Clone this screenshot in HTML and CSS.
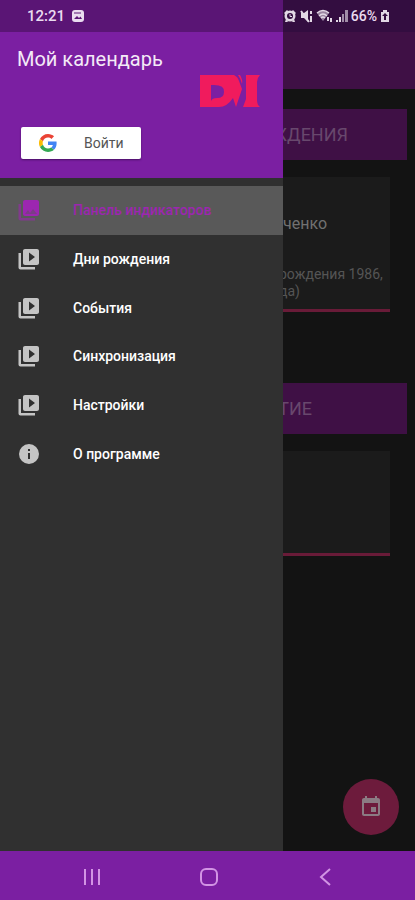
FILE: index.html
```html
<!DOCTYPE html>
<html lang="ru">
<head>
<meta charset="utf-8">
<meta name="viewport" content="width=device-width, initial-scale=1">
<title>Мой календарь</title>
<link rel="stylesheet" href="styles.css">
</head>
<body>
<svg class="sprite" aria-hidden="true">
  <symbol id="library" viewBox="0 0 24 24"><path d="M4 6H1.500v14.500c0 1.100.9 2 2 2H18V20H4V6zm16-4H8c-1.100 0-2 .9-2 2v12c0 1.100.9 2 2 2h12c1.100 0 2-.9 2-2V4c0-1.100-.9-2-2-2zm-8 12.500v-9l6 4.500-6 4.500z"/></symbol>
</svg>
<div class="screen">
  <header class="status">
    <div class="status-left">
      <span>12:21</span>
      <svg width="14" height="14" viewBox="0 0 14 14"><rect x="1" y="1" width="12" height="12" rx="3" fill="#eadcf0"/><path d="M3 10l3-3 2 2 1.500-1.500L11 10z" fill="#5a1575"/><path d="M3 4h7" stroke="#5a1575"/></svg>
    </div>
    <div class="status-right">
      <svg width="13" height="14" viewBox="0 0 13 14" fill="#e2d8e5"><circle cx="6" cy="7" r="5.500"/><path d="M0 4l3-3 2 2-3 3zM12 4L9 1 7 3l3 3zM2 10l-1 3h3zm8 0l1 3H8z"/><circle cx="6" cy="7" r="3" fill="#330d40"/><path d="M6 5v2.500h2" stroke="#e2d8e5" fill="none"/></svg>
      <svg width="13" height="14" viewBox="0 0 13 14"><path d="M1 4h3l4-3v12L4 9H1z" fill="#e2d8e5"/><path d="M1 2l8 11M11 2v3M11 7v6" stroke="#e2d8e5" stroke-width="2"/></svg>
      <svg width="17" height="14" viewBox="0 0 17 14"><path d="M1 4q6-5 12 0L7 12z" fill="#9a84a1"/><path d="M1 4q6-5 12 0M3 7q4-4 8 0M5 9q2-2 4 0" stroke="#e2d8e5" stroke-width="1.500" fill="none"/><path d="M12 8v4M15 9v4" stroke="#e2d8e5" stroke-width="2"/></svg>
      <svg width="12" height="14" viewBox="0 0 12 14"><path d="M0 11h2v2H0zM3 8h2v5H3z" fill="#e2d8e5"/><path d="M6 5h2v8H6zM9 1h3v12H9z" fill="#a18da8"/></svg>
      <span>66%</span>
      <svg width="10" height="14" viewBox="0 0 10 14"><path d="M3 1h4v2h2v10H1V3h2z" fill="#e2d8e5"/><path d="M5 4L2 7h2v4h2V7h2z" fill="#330d40"/></svg>
    </div>
  </header>
  <aside class="drawer">
    <div class="account">
      <h1>Мой календарь</h1>
      <svg class="logo" width="62" height="34" viewBox="0 0 62 34" fill="#f01b5d"><path fill-rule="evenodd" d="M1 1H35q4 2 5 6l3 8-6 18-3-9q-6 9-14 9H1zM12 11q14-1 13 7 0 6-7 6-5 0-6 3z"/><path d="M39 1h2q3 5 2 9-1-5-4-9z"/><path d="M47 1h14q-3 3-3 7v18q0 5 3 7H44l3-8z"/></svg>
      <button class="signin" type="button">
        <svg width="18" height="18" viewBox="0 0 48 48"><path fill="#ea4335" d="M24 9.500c3.540 0 6.710 1.220 9.210 3.600l6.850-6.850C35.900 2.380 30.470 0 24 0 14.620 0 6.510 5.380 2.560 13.220l7.980 6.190C12.430 13.720 17.740 9.500 24 9.500z"/><path fill="#4285f4" d="M46.980 24.550c0-1.570-.15-3.090-.38-4.550H24v9.020h12.940c-.58 2.960-2.260 5.480-4.780 7.180l7.730 6c4.510-4.180 7.090-10.360 7.090-17.650z"/><path fill="#fbbc05" d="M10.530 28.590A14.500 14.500 0 0 1 10.530 19.410l-7.980-6.190a24 24 0 0 0 0 21.560z"/><path fill="#34a853" d="M24 48c6.480 0 11.930-2.130 15.890-5.810l-7.730-6c-2.150 1.450-4.920 2.300-8.160 2.300-6.260 0-11.570-4.220-13.470-9.910l-7.980 6.190C6.510 42.620 14.620 48 24 48z"/></svg>
        <span>Войти</span>
      </button>
    </div>
    <nav class="menu">
      <a href="#" class="item selected"><svg viewBox="0 0 24 24"><path opacity=".6" d="M4 6H1.500v14.500c0 1.100.9 2 2 2H18V20H4z"/><path d="M22 16V4c0-1.100-.9-2-2-2H8c-1.100 0-2 .9-2 2v12c0 1.100.9 2 2 2h12c1.100 0 2-.9 2-2z"/><path d="M8 16l3-4 2 3 3-4 4 5z" fill="#7b3d86"/></svg>Панель индикаторов</a>
      <a href="#" class="item"><svg><use href="#library"/></svg>Дни рождения</a>
      <a href="#" class="item"><svg><use href="#library"/></svg>События</a>
      <a href="#" class="item"><svg><use href="#library"/></svg>Синхронизация</a>
      <a href="#" class="item"><svg><use href="#library"/></svg>Настройки</a>
      <a href="#" class="item"><svg viewBox="0 0 24 24"><path d="M12 2a10 10 0 1 0 0 20 10 10 0 0 0 0-20zm1 15h-2v-6h2zm0-8h-2V7h2z"/></svg>О программе</a>
    </nav>
  </aside>
  <main class="content">
    <div class="appbar"></div>
    <section class="group">
      <h2 class="heading birthday">ЖДЕНИЯ</h2>
      <article class="card person">
        <h3>ченко</h3>
        <p>рождения 1986,<br>да)</p>
      </article>
    </section>
    <section class="group">
      <h2 class="heading event">ТИЕ</h2>
      <article class="card"></article>
    </section>
    <button class="fab" type="button" aria-label="Добавить">
      <svg width="24" height="24" viewBox="0 0 24 24"><path d="M17 12h-5v5h5v-5zM16 1v2H8V1H6v2H5c-1.110 0-2 .9-2 2v14c0 1.100.89 2 2 2h14c1.100 0 2-.9 2-2V5c0-1.100-.9-2-2-2h-1V1h-2zm3 18H5V8h14v11z"/></svg>
    </button>
  </main>
  <footer class="system">
    <button type="button" aria-label="Недавние"><svg width="24" height="24" viewBox="0 0 24 24"><path d="M6 5v16M13 5v16M20 5v16"/></svg></button>
    <button type="button" aria-label="Домой"><svg width="24" height="24" viewBox="0 0 24 24"><rect x="5" y="5" width="16" height="16" rx="5"/></svg></button>
    <button type="button" aria-label="Назад"><svg width="24" height="24" viewBox="0 0 24 24"><path d="M18 5l-9 8 9 8"/></svg></button>
  </footer>
</div>
</body>
</html>
```
FILE: styles.css
```css
* {
  box-sizing: border-box;
}

body,
h1,
h2,
h3,
p {
  margin: 0;
  font-weight: 400;
}

body {
  font-family: Roboto, "Noto Sans", sans-serif;
  background: #131313;
}

button {
  border: 0;
  padding: 0;
  font: inherit;
}

.sprite {
  display: none;
}

.screen {
  display: grid;
  grid-template-columns: 283px minmax(0, 1fr);
  grid-template-rows: 32px 1fr 49px;
  min-height: 100vh;
}

.status {
  grid-column: 1 / -1;
  display: flex;
  justify-content: space-between;
  padding: 0 25px 0 27px;
  background: linear-gradient(90deg, #5a1575 283px, #330d40 283px);
  color: #eadcf0;
  font-size: 15px;
  font-weight: 500;
}

.status-left,
.status-right {
  display: flex;
  align-items: center;
}

.status-left {
  gap: 6px;
}

.status-right {
  gap: 3px;
  font-size: 14px;
}

.drawer {
  background: #303030;
}

.account {
  display: flex;
  flex-direction: column;
  height: 146px;
  padding: 14px 22px 19px 17px;
  background: #7b1fa2;
}

.account h1 {
  color: #f4eaf7;
  font-size: 20px;
  line-height: 26px;
}

.logo {
  align-self: flex-end;
  margin-top: 2px;
}

.signin {
  display: flex;
  align-items: center;
  gap: 27px;
  width: 120px;
  height: 32px;
  margin-top: auto;
  margin-left: 4px;
  padding-left: 18px;
  border-radius: 2px;
  background: #fff;
  box-shadow: 0 1px 2px #4a1065;
  color: #555;
  font-size: 14px;
}

.menu {
  display: grid;
  grid-auto-rows: 1fr;
  height: 300px;
  padding-top: 8px;
}

.item {
  display: flex;
  align-items: center;
  gap: 32px;
  padding-left: 17px;
  color: #fff;
  font-size: 14px;
  font-weight: 500;
  text-decoration: none;
}

.item svg {
  width: 24px;
  height: 24px;
  fill: #c4c4c4;
}

.item.selected {
  background: #595959;
  color: #9c27b0;
}

.item.selected svg {
  fill: #9c27b0;
}

.content {
  display: flex;
  flex-direction: column;
  overflow: hidden;
  background: #131313;
  color: #666;
}

.appbar {
  height: 57px;
  margin-bottom: 20px;
  background: #3f1045;
}

.group {
  display: flex;
  flex-direction: column;
  gap: 17px;
  margin-bottom: 71px;
}

.heading {
  display: flex;
  align-items: center;
  justify-content: flex-end;
  height: 51px;
  margin-right: 8px;
  background: #3f1045;
  color: #68486d;
  font-size: 18px;
}

.birthday {
  padding-right: 59px;
}

.event {
  padding-right: 95px;
}

.card {
  min-height: 105px;
  margin-right: 25px;
  border-bottom: 3px solid #691b38;
  background: #1b1b1b;
}

.person {
  min-height: 135px;
  padding-top: 35px;
}

.person h3 {
  color: #717171;
  font-size: 16px;
  line-height: 24px;
}

.person p {
  margin: 30px 0 0 -4px;
  color: #555;
  font-size: 14px;
  line-height: 17px;
  white-space: nowrap;
}

.fab {
  display: grid;
  place-items: center;
  flex-shrink: 0;
  width: 56px;
  height: 56px;
  margin: auto 16px 16px auto;
  border-radius: 50%;
  background: #6d1b3c;
}

.fab svg {
  fill: #8b7b83;
}

.system {
  grid-column: 1 / -1;
  display: flex;
  align-items: center;
  justify-content: center;
  background: #7b1fa2;
}

.system button {
  display: grid;
  place-items: center;
  flex: 0 0 28%;
  height: 48px;
  background: none;
}

.system svg {
  fill: none;
  stroke: #d294e4;
  stroke-width: 2;
}
```
